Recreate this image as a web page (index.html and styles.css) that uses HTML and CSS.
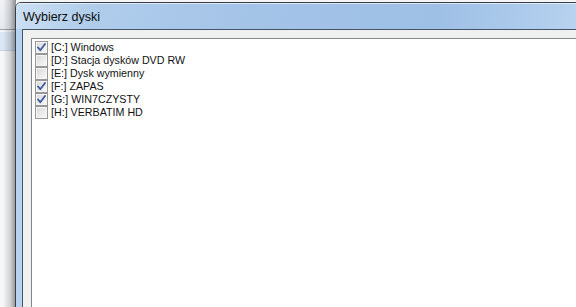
FILE: index.html
```html
<!DOCTYPE html>
<html lang="pl">
<head>
<meta charset="utf-8">
<title>Wybierz dyski</title>
<link rel="stylesheet" href="styles.css">
</head>
<body>
<div class="desktop">
  <div class="behind">
    <div class="behind-top"></div>
    <div class="behind-band"></div>
    <div class="behind-rest"></div>
    <div class="shadow"></div>
  </div>
  <div class="dialog">
    <div class="titlebar"><span class="title">Wybierz dyski</span></div>
    <div class="frame">
      <div class="client">
        <ul class="listbox">
          <li class="item"><span class="cb checked"><svg viewBox="0 0 9 9" class="tick"><path d="M1 4.5 L3.3 7.2 L8 1"/></svg></span><span class="label">[C:] Windows</span></li>
          <li class="item"><span class="cb"></span><span class="label">[D:] Stacja dysków DVD RW</span></li>
          <li class="item"><span class="cb"></span><span class="label">[E:] Dysk wymienny</span></li>
          <li class="item"><span class="cb checked"><svg viewBox="0 0 9 9" class="tick"><path d="M1 4.5 L3.3 7.2 L8 1"/></svg></span><span class="label">[F:] ZAPAS</span></li>
          <li class="item"><span class="cb checked"><svg viewBox="0 0 9 9" class="tick"><path d="M1 4.5 L3.3 7.2 L8 1"/></svg></span><span class="label">[G:] WIN7CZYSTY</span></li>
          <li class="item"><span class="cb"></span><span class="label">[H:] VERBATIM HD</span></li>
        </ul>
      </div>
    </div>
  </div>
</div>
</body>
</html>
```
FILE: styles.css
```css
html, body {
  margin: 0;
  padding: 0;
  overflow: hidden;
}
body {
  width: 576px;
  height: 307px;
  font-family: "Liberation Sans", Arial, sans-serif;
}
.desktop {
  position: relative;
  width: 576px;
  height: 307px;
  overflow: hidden;
  background: #f4f5f7;
}
.behind {
  display: flex;
  flex-direction: column;
  width: 16px;
  height: 307px;
  position: relative;
}
.behind-top {
  flex: none;
  height: 29px;
  background: linear-gradient(#f0f2f5, #e6eaef);
  border-bottom: 1px solid #9aa3ad;
}
.behind-band {
  flex: none;
  height: 18px;
  margin-top: 2px;
  background: #dbe7f4;
  border-bottom: 1px solid #c6d6e8;
}
.behind-rest {
  flex: 1;
  background: #f6f7f8;
}
.shadow {
  position: absolute;
  left: 3px;
  top: 0;
  width: 13px;
  height: 307px;
  background: linear-gradient(to right, rgba(0,0,0,0), rgba(0,0,0,0.15) 55%, rgba(0,0,0,0.42));
}
.dialog {
  position: absolute;
  left: 15px;
  top: 2px;
  right: -40px;
  bottom: -20px;
  border: 1px solid #3a3f46;
  border-radius: 6px 6px 0 0;
  background: #b8d4f0;
  display: flex;
  flex-direction: column;
}
.titlebar {
  flex: none;
  height: 26px;
  padding-left: 7px;
  display: flex;
  align-items: center;
  background: linear-gradient(100deg, #cde0f4 0%, #b0cdeb 12%, #a3c3e7 40%, #9ec0e5 70%, #b0cdec 88%, #c2d9f1 100%);
  border-radius: 5px 5px 0 0;
  box-shadow: inset 0 1px 0 rgba(255,255,255,0.6);
}
.title {
  font-size: 12.5px;
  color: #0c0c0c;
  margin-top: 1px;
}
.frame {
  flex: 1;
  min-height: 0;
  display: flex;
  padding: 0 0 0 6px;
  background: linear-gradient(to right, #b4d1f0, #c8def5 50%, #b1cdee);
}
.client {
  flex: 1;
  display: flex;
  background: #f0f0f0;
  border-top: 1px solid #44556a;
  border-left: 1px solid #44556a;
  padding: 8px 0 0 8px;
}
.listbox {
  flex: 1;
  list-style: none;
  margin: 0;
  padding: 2px 0 0 3px;
  background: #fff;
  border: 1px solid #828790;
}
.item {
  display: flex;
  align-items: center;
  height: 13px;
  font-size: 10.7px;
  color: #111;
  line-height: 13px;
}
.cb {
  width: 11px;
  height: 11px;
  border: 1px solid #979797;
  background: linear-gradient(135deg, #d6d7d9, #eeeeee 65%, #fafafa);
  box-shadow: inset 0 0 0 1px #f6f6f6;
  margin-right: 3px;
  flex: none;
  display: flex;
  align-items: center;
  justify-content: center;
}
.tick {
  width: 9px;
  height: 9px;
}
.tick path {
  fill: none;
  stroke: #3d5aa0;
  stroke-width: 1.8;
  stroke-linecap: round;
  stroke-linejoin: round;
}
.label {
  white-space: nowrap;
}
```
